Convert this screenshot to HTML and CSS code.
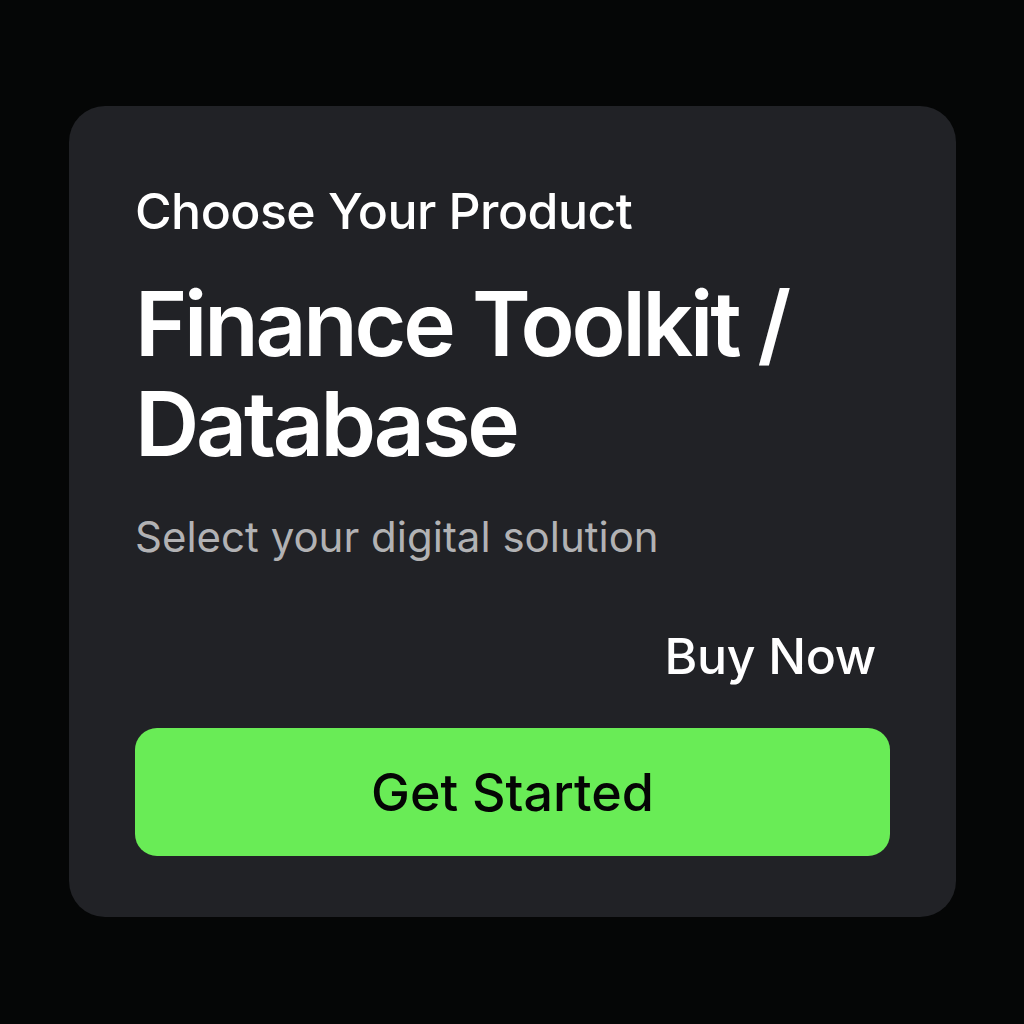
FILE: index.html
```html
<!DOCTYPE html>
<html lang="en">
<head>
<meta charset="utf-8">
<link rel="stylesheet" href="styles.css">
<title>Choose Your Product</title>
</head>
<body>
<main class="card">
  <p class="eyebrow">Choose Your Product</p>
  <h1 class="title">Finance Toolkit /<br>Database</h1>
  <p class="subtitle">Select your digital solution</p>
  <div class="buy-row"><span class="buy">Buy Now</span></div>
  <button class="cta">Get Started</button>
</main>
</body>
</html>
```
FILE: styles.css
```css
html, body {
  margin: 0;
  padding: 0;
  background: #050606;
  width: 1024px;
  height: 1024px;
  font-family: Inter, "Noto Sans", sans-serif;
}
body {
  padding: 106px 68px 0 69px;
  box-sizing: border-box;
}
.card {
  background: #212226;
  border-radius: 36px;
  height: 811px;
  box-sizing: border-box;
  padding: 75px 66px 0 66px;
  display: flex;
  flex-direction: column;
  color: #ffffff;
}
.eyebrow {
  margin: 0;
  font-size: 50px;
  font-weight: 500;
  line-height: 60px;
  letter-spacing: -0.55px;
}
.title {
  margin: 33px 0 0 0;
  font-size: 89px;
  font-weight: 600;
  line-height: 100px;
  letter-spacing: -3.2px;
}
.subtitle {
  margin: 35px 0 0 0;
  font-size: 42px;
  font-weight: 400;
  line-height: 56px;
  color: #b2b2b4;
}
.buy-row {
  display: flex;
  justify-content: flex-end;
  margin-top: 61px;
  padding-right: 14px;
}
.buy {
  font-size: 50px;
  font-weight: 500;
  line-height: 60px;
  letter-spacing: -0.3px;
}
.cta {
  margin-top: 42px;
  height: 128px;
  border: none;
  border-radius: 22px;
  background: #69ec56;
  color: #050505;
  font-family: inherit;
  font-size: 52px;
  font-weight: 500;
  letter-spacing: 0;
}
```
